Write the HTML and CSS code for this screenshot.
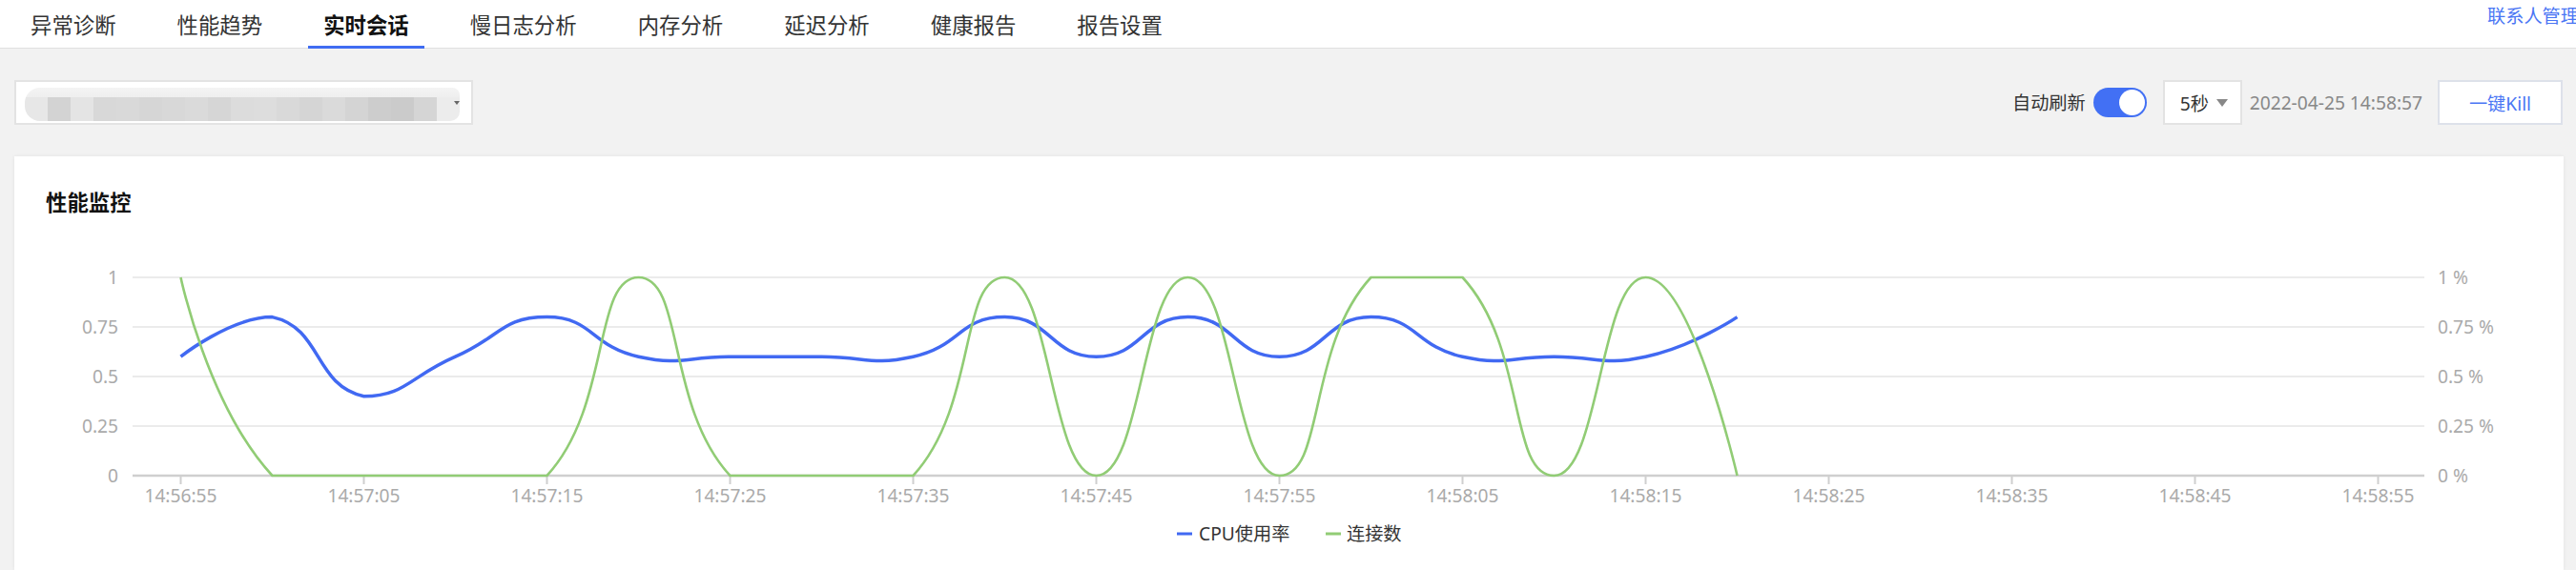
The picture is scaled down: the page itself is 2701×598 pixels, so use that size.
FILE: index.html
```html
<!DOCTYPE html>
<html lang="zh-CN">
<head>
<meta charset="utf-8">
<title>实时会话</title>
<link rel="stylesheet" href="styles.css">
</head>
<body>
<header class="topbar">
  <nav class="tabs">
    <a class="tab">异常诊断</a>
    <a class="tab">性能趋势</a>
    <a class="tab active">实时会话</a>
    <a class="tab">慢日志分析</a>
    <a class="tab">内存分析</a>
    <a class="tab">延迟分析</a>
    <a class="tab">健康报告</a>
    <a class="tab">报告设置</a>
  </nav>
  <a class="contact">联系人管理</a>
</header>
<main class="main">
  <div class="toolbar">
    <div class="instance-select">
      <div class="mask"></div>
      <span class="caret-sm"></span>
    </div>
    <div class="tools">
      <span class="label">自动刷新</span>
      <span class="switch"><span class="knob"></span></span>
      <div class="interval"><span>5秒</span><span class="caret"></span></div>
      <span class="time">2022-04-25 14:58:57</span>
      <button class="kill">一键Kill</button>
    </div>
  </div>
  <section class="card">
    <h2 class="card-title">性能监控</h2>
    <svg class="chart" viewBox="48 230 2607 368" width="2607" height="368" xmlns="http://www.w3.org/2000/svg">
      <g class="grid">
        <line x1="139" x2="2542" y1="291" y2="291"/>
        <line x1="139" x2="2542" y1="343" y2="343"/>
        <line x1="139" x2="2542" y1="395" y2="395"/>
        <line x1="139" x2="2542" y1="447" y2="447"/>
      </g>
      <line class="axis" x1="139" x2="2542" y1="499" y2="499"/>
      <g class="ticks">
        <line x1="189.5" x2="189.5" y1="499" y2="508"/>
        <line x1="381.5" x2="381.5" y1="499" y2="508"/>
        <line x1="573.5" x2="573.5" y1="499" y2="508"/>
        <line x1="765.5" x2="765.5" y1="499" y2="508"/>
        <line x1="957.5" x2="957.5" y1="499" y2="508"/>
        <line x1="1149.5" x2="1149.5" y1="499" y2="508"/>
        <line x1="1341.5" x2="1341.5" y1="499" y2="508"/>
        <line x1="1533.5" x2="1533.5" y1="499" y2="508"/>
        <line x1="1725.5" x2="1725.5" y1="499" y2="508"/>
        <line x1="1917.5" x2="1917.5" y1="499" y2="508"/>
        <line x1="2109.5" x2="2109.5" y1="499" y2="508"/>
        <line x1="2301.5" x2="2301.5" y1="499" y2="508"/>
        <line x1="2493.5" x2="2493.5" y1="499" y2="508"/>
      </g>
      <g class="ax xlab">
        <text x="189.5" y="527">14:56:55</text>
        <text x="381.5" y="527">14:57:05</text>
        <text x="573.5" y="527">14:57:15</text>
        <text x="765.5" y="527">14:57:25</text>
        <text x="957.5" y="527">14:57:35</text>
        <text x="1149.5" y="527">14:57:45</text>
        <text x="1341.5" y="527">14:57:55</text>
        <text x="1533.5" y="527">14:58:05</text>
        <text x="1725.5" y="527">14:58:15</text>
        <text x="1917.5" y="527">14:58:25</text>
        <text x="2109.5" y="527">14:58:35</text>
        <text x="2301.5" y="527">14:58:45</text>
        <text x="2493.5" y="527">14:58:55</text>
      </g>
      <g class="ax ylab-left">
        <text x="124" y="297.5">1</text>
        <text x="124" y="349.5">0.75</text>
        <text x="124" y="401.5">0.5</text>
        <text x="124" y="453.5">0.25</text>
        <text x="124" y="505.5">0</text>
      </g>
      <g class="ax ylab-right">
        <text x="2556" y="297.5">1 %</text>
        <text x="2556" y="349.5">0.75 %</text>
        <text x="2556" y="401.5">0.5 %</text>
        <text x="2556" y="453.5">0.25 %</text>
        <text x="2556" y="505.5">0 %</text>
      </g>
      <path id="line-cpu" class="series-cpu" d=""/>
      <path id="line-conn" class="series-conn" d=""/>
      <g class="legend">
        <rect class="lg-cpu" x="1234" y="558.5" width="16" height="3"/>
        <text x="1257" y="567">CPU使用率</text>
        <rect class="lg-conn" x="1390" y="558.5" width="16" height="3"/>
        <text x="1412" y="567">连接数</text>
      </g>
    </svg>
  </section>
</main>
<script src="chart.js"></script>
</body>
</html>
```

FILE: styles.css
```css
* { box-sizing: border-box; }
html, body { margin: 0; padding: 0; overflow: hidden; }
body {
  width: 2701px;
  height: 598px;
  background: #f2f2f2;
  font-family: "Noto Sans", "Noto Sans CJK SC", sans-serif;
  color: #333;
}

/* header */
.topbar {
  display: flex;
  align-items: flex-start;
  height: 51px;
  background: #fff;
  border-bottom: 1px solid #e0e0e0;
  padding-left: 16px;
}
.tabs { display: flex; }
.tab {
  display: block;
  height: 51px;
  padding: 6px 16px 0;
  margin-right: 32px;
  font-size: 22.4px;
  line-height: 42px;
  color: #333;
  border-bottom: 3px solid transparent;
  white-space: nowrap;
  text-decoration: none;
}
.tab.active {
  font-weight: 700;
  color: #111;
  border-bottom-color: #3f6cf2;
}
.contact {
  margin-left: auto;
  margin-right: -3px;
  padding-top: 6px;
  font-size: 19.2px;
  line-height: 21px;
  color: #4a76f4;
  white-space: nowrap;
}

/* main */
.main { padding: 33px 13px 0 15px; }
.toolbar {
  display: flex;
  align-items: center;
  justify-content: space-between;
  height: 47px;
}
.instance-select {
  display: flex;
  align-items: center;
  width: 481px;
  height: 47px;
  background: #fff;
  border: 2px solid #e3e3e3;
  padding: 0 12px 0 9px;
}
.mask {
  flex: 1;
  height: 35px;
  margin-top: 4px;
  border-radius: 16px 8px 10px 16px;
  background:
    linear-gradient(to bottom, #f4f4f4 0, #efefef 28%, rgba(255,255,255,0) 28%),
    linear-gradient(to right,
      #e7e7e7 0 24px, #d3d3d3 24px 48px, #e4e4e4 48px 72px, #d8d8d8 72px 96px,
      #d9d9d9 96px 120px, #d6d6d6 120px 144px, #d8d8d8 144px 168px, #dadada 168px 192px,
      #d6d6d6 192px 216px, #dcdcdc 216px 240px, #dddddd 240px 264px, #d9d9d9 264px 288px,
      #d5d5d5 288px 312px, #dadada 312px 336px, #d4d4d4 336px 360px, #cdcdcd 360px 384px,
      #cbcbcb 384px 408px, #d5d5d5 408px 432px, #ececec 432px 460px);
}
.caret-sm {
  width: 0;
  height: 0;
  margin-left: -6px;
  border-left: 3px solid transparent;
  border-right: 3px solid transparent;
  border-top: 4px solid #666;
}

.tools {
  display: flex;
  align-items: center;
  padding-right: 1px;
}
.label {
  font-size: 19.2px;
  line-height: 26px;
  color: #333;
  white-space: nowrap;
}
.switch {
  display: flex;
  justify-content: flex-end;
  align-items: center;
  width: 56px;
  height: 31px;
  margin-left: 8px;
  padding: 2px;
  border-radius: 16px;
  background: #4270f4;
}
.knob {
  width: 27px;
  height: 27px;
  border-radius: 50%;
  background: #fff;
}
.interval {
  display: flex;
  align-items: center;
  width: 83px;
  height: 47px;
  margin-left: 17px;
  padding: 0 13px 0 16px;
  background: #fff;
  border: 2px solid #e3e3e3;
  font-size: 19.2px;
  color: #333;
  white-space: nowrap;
}
.caret {
  width: 0;
  height: 0;
  margin-left: 8px;
  border-left: 6px solid transparent;
  border-right: 6px solid transparent;
  border-top: 8px solid #888;
}
.time {
  margin-left: 8px;
  font-size: 19.2px;
  color: #888;
  white-space: nowrap;
}
.kill {
  width: 131px;
  height: 47px;
  margin-left: 16px;
  padding: 0;
  background: #fff;
  border: 2px solid #dde1ea;
  font-family: "Noto Sans", "Noto Sans CJK SC", sans-serif;
  font-size: 19.2px;
  color: #4a76f4;
}

/* card */
.card {
  margin-top: 33px;
  height: 434px;
  padding: 32px 33px 0;
  background: #fff;
  box-shadow: 0 0 4px rgba(0, 0, 0, 0.07);
}
.card-title {
  margin: 0;
  font-size: 22.4px;
  line-height: 34px;
  font-weight: 700;
  color: #111;
}
.chart { display: block; }
.grid line { stroke: #ebebeb; stroke-width: 2; }
.axis { stroke: #cfcfcf; stroke-width: 2.5; }
.ticks line { stroke: #cfcfcf; stroke-width: 2; }
.ax text {
  font-family: "Noto Sans", sans-serif;
  font-size: 19.2px;
  fill: #aaa;
}
.xlab text { text-anchor: middle; }
.ylab-left text { text-anchor: end; }
.ylab-right text { text-anchor: start; }
.series-cpu { fill: none; stroke: #4169f2; stroke-width: 3.5; stroke-linejoin: round; }
.series-conn { fill: none; stroke: #91cc75; stroke-width: 2.6; stroke-linejoin: round; }
.legend text {
  font-family: "Noto Sans", "Noto Sans CJK SC", sans-serif;
  font-size: 19.2px;
  fill: #333;
}
.lg-cpu { fill: #4169f2; }
.lg-conn { fill: #91cc75; }
```

FILE: chart.js
```js
(function () {
  var X0 = 189.5, STEP = 96, Y0 = 499, H = 208;
  var cpu = [0.6, 0.8, 0.4, 0.6, 0.8, 0.6, 0.6, 0.6, 0.6, 0.8, 0.6, 0.8, 0.6, 0.8, 0.6, 0.6, 0.6, 0.8];
  var conn = [1, 0, 0, 0, 0, 1, 0, 0, 0, 1, 0, 1, 0, 1, 1, 0, 1, 0];

  function pts(data) {
    return data.map(function (v, i) { return [X0 + STEP * i, Y0 - H * v]; });
  }
  function f(n) { return n.toFixed(2); }
  function dist(a, b) {
    var dx = a[0] - b[0], dy = a[1] - b[1];
    return Math.sqrt(dx * dx + dy * dy);
  }

  /* smoothed polyline, control points constrained to the data's bounding box */
  function smoothPath(points, smooth) {
    var n = points.length;
    var minX = Infinity, minY = Infinity, maxX = -Infinity, maxY = -Infinity;
    points.forEach(function (p) {
      minX = Math.min(minX, p[0]); maxX = Math.max(maxX, p[0]);
      minY = Math.min(minY, p[1]); maxY = Math.max(maxY, p[1]);
    });
    function clamp(c) {
      return [Math.max(minX, Math.min(maxX, c[0])), Math.max(minY, Math.min(maxY, c[1]))];
    }
    var d = 'M' + f(points[0][0]) + ' ' + f(points[0][1]);
    var cp0 = points[0].slice();
    for (var i = 1; i < n; i++) {
      var p = points[i], prevP = points[i - 1], nextP = points[i + 1];
      var cp1, vx = 0, vy = 0, r = 0.5;
      if (!nextP) {
        cp1 = p.slice();
      } else {
        vx = nextP[0] - prevP[0];
        vy = nextP[1] - prevP[1];
        var lp = dist(p, prevP), ln = dist(p, nextP);
        r = ln / (ln + lp);
        cp1 = [p[0] - vx * smooth * (1 - r), p[1] - vy * smooth * (1 - r)];
      }
      var a = clamp(cp0), b = clamp(cp1);
      d += 'C' + f(a[0]) + ' ' + f(a[1]) + ' ' + f(b[0]) + ' ' + f(b[1]) + ' ' + f(p[0]) + ' ' + f(p[1]);
      cp0 = [p[0] + vx * smooth * r, p[1] + vy * smooth * r];
    }
    return d;
  }

  document.getElementById('line-cpu').setAttribute('d', smoothPath(pts(cpu), 0.5));
  document.getElementById('line-conn').setAttribute('d', smoothPath(pts(conn), 0.5));
})();
```
